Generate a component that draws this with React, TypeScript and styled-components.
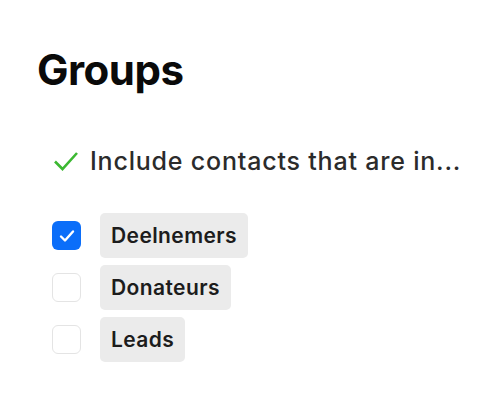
import React from "react";
import styled, {createGlobalStyle} from "styled-components";

const Global = createGlobalStyle`
  body {
    margin: 0;
    background: #fff;
    font-family: "Inter", "Noto Sans", sans-serif;
    color: #111;
  }
`;

const Page = styled.div`
  padding: 46px 37px;
  display: flex;
  flex-direction: column;
`;

const Title = styled.h1`
  margin: 0;
  font-size: 42px;
  font-weight: 700;
  letter-spacing: -0.5px;
  line-height: 48px;
  color: #0a0a0a;
`;

const Rule = styled.div`
  margin-top: 52px;
  display: flex;
  align-items: center;
  gap: 11px;
  padding-left: 16px;
  font-size: 25px;
  font-weight: 500;
  color: #2b2b2b;
  letter-spacing: 0.8px;
`;

const List = styled.ul`
  list-style: none;
  margin: 37px 0 0;
  padding: 0 0 0 15px;
  display: flex;
  flex-direction: column;
  gap: 7px;
`;

const Row = styled.li`
  display: flex;
  align-items: center;
  gap: 19px;
`;

const Box = styled.span<{ $checked?: boolean }>`
  width: 29px;
  height: 29px;
  box-sizing: border-box;
  border-radius: 6px;
  display: flex;
  align-items: center;
  justify-content: center;
  background: ${p => (p.$checked ? "#0b6ef9" : "#fff")};
  border: ${p => (p.$checked ? "none" : "1.5px solid #e4e4e4")};
`;

const Tag = styled.span`
  background: #ebebeb;
  border-radius: 5px;
  height: 45px;
  display: flex;
  align-items: center;
  padding: 0 11px;
  font-size: 21px;
  font-weight: 600;
  letter-spacing: 0.4px;
  color: #1c1c1c;
`;

const groups = [
    {name: "Deelnemers", checked: true},
    {name: "Donateurs", checked: false},
    {name: "Leads", checked: false},
];

function App() {
    return (
        <Page>
            <Global/>
            <Title>Groups</Title>
            <Rule>
                <svg width="26" height="20" viewBox="0 0 26 20">
                    <path d="M2 10.5 L9.5 18 L24 2" fill="none" stroke="#3cb832" strokeWidth="2.6"/>
                </svg>
                Include contacts that are in...
            </Rule>
            <List>
                {groups.map(g =>
                    <Row key={g.name}>
                        <Box $checked={g.checked}>
                            {g.checked &&
                                <svg width="16" height="14" viewBox="0 0 16 14">
                                    <path d="M2 7.5 L6 11.5 L14 2.5" fill="none" stroke="#fff" strokeWidth="2.4"
                                          strokeLinecap="round" strokeLinejoin="round"/>
                                </svg>}
                        </Box>
                        <Tag>{g.name}</Tag>
                    </Row>)}
            </List>
        </Page>
    );
}

export default App;
